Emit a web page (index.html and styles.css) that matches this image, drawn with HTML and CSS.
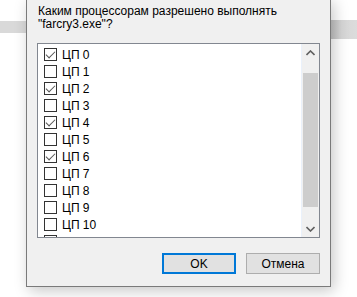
FILE: index.html
```html
<!DOCTYPE html>
<html lang="ru">
<head>
  <meta charset="UTF-8" />
  <title>Соответствие</title>
  <link rel="stylesheet" href="styles.css">
</head>
<body>
  <div class="desk">
    <div class="band band-left"></div>
    <div class="band band-right"></div>

    <div class="dialog">
      <div class="prompt">Каким процессорам разрешено выполнять<br>"farcry3.exe"?</div>

      <div class="listbox">
        <div class="items">
          <label class="item"><span class="box checked"></span>ЦП 0</label>
          <label class="item"><span class="box"></span>ЦП 1</label>
          <label class="item"><span class="box checked"></span>ЦП 2</label>
          <label class="item"><span class="box"></span>ЦП 3</label>
          <label class="item"><span class="box checked"></span>ЦП 4</label>
          <label class="item"><span class="box"></span>ЦП 5</label>
          <label class="item"><span class="box checked"></span>ЦП 6</label>
          <label class="item"><span class="box"></span>ЦП 7</label>
          <label class="item"><span class="box"></span>ЦП 8</label>
          <label class="item"><span class="box"></span>ЦП 9</label>
          <label class="item"><span class="box"></span>ЦП 10</label>
          <label class="item"><span class="box"></span></label>
        </div>
        <div class="scrollbar">
          <div class="arrow">
            <svg width="9" height="6" viewBox="0 0 9 6"><path d="M0.5 5 L4.5 1 L8.5 5" fill="none" stroke="#606060" stroke-width="1.6"/></svg>
          </div>
          <div class="track"><div class="thumb"></div></div>
          <div class="arrow">
            <svg width="9" height="6" viewBox="0 0 9 6"><path d="M0.5 1 L4.5 5 L8.5 1" fill="none" stroke="#606060" stroke-width="1.6"/></svg>
          </div>
        </div>
      </div>

      <div class="actions">
        <button class="btn default">OK</button>
        <button class="btn">Отмена</button>
      </div>
    </div>
  </div>
</body>
</html>
```

FILE: styles.css
```css
* {
  box-sizing: border-box;
}
body {
  margin: 0;
  background: #fff;
  font-family: 'Segoe UI', 'Liberation Sans', Arial, sans-serif;
  font-size: 12px;
  color: #000;
  overflow: hidden;
}
.desk {
  position: relative;
  width: 357px;
  height: 297px;
}
.band {
  position: absolute;
  background: #d9d9d9;
}
.band-left {
  left: 0;
  top: 21px;
  width: 26px;
  height: 12px;
}
.band-right {
  left: 331px;
  top: 20px;
  width: 26px;
  height: 19px;
  background: linear-gradient(to right, #c4c4c4, #d6d6d6 40%, #dcdcdc);
}
.dialog {
  position: absolute;
  left: 26px;
  top: -2px;
  width: 305px;
  height: 289px;
  background: #f0f0f0;
  border: 1px solid #7a7a7a;
  border-top: none;
  box-shadow: 3px 4px 14px rgba(0,0,0,0.22);
  padding: 7px 11px 0 10px;
  display: flex;
  flex-direction: column;
}
.prompt {
  line-height: 13px;
  height: 38px;
  padding-left: 1px;
}
.listbox {
  display: flex;
  width: 283px;
  height: 195px;
  flex: none;
  background: #fff;
  border: 1px solid #828790;
  overflow: hidden;
}
.items {
  flex: 1;
  padding: 2px 0 0 6px;
}
.item {
  display: flex;
  align-items: center;
  height: 17px;
  gap: 5px;
}
.box {
  width: 13px;
  height: 13px;
  border: 1px solid #333;
  background: #fff;
  position: relative;
}
.box.checked::after {
  content: '';
  position: absolute;
  left: 3px;
  top: 0px;
  width: 4px;
  height: 8px;
  border-right: 1px solid #555;
  border-bottom: 1px solid #555;
  transform: rotate(45deg);
}
.scrollbar {
  width: 18px;
  background: #f0f0f0;
  border-left: 1px solid #eaf1fb;
  display: flex;
  flex-direction: column;
}
.arrow {
  height: 17px;
  display: flex;
  align-items: center;
  justify-content: center;
}
.track {
  flex: 1;
  padding: 0 1px;
  display: flex;
  flex-direction: column;
}
.thumb {
  margin-top: 12px;
  height: 134px;
  background: #cdcdcd;
}
.actions {
  display: flex;
  justify-content: flex-end;
  gap: 10px;
  margin-top: 15px;
  width: 283px;
}
.btn {
  width: 74px;
  height: 21px;
  font-family: inherit;
  font-size: 12px;
  background: #e1e1e1;
  border: 1px solid #adadad;
  padding: 0;
  color: #000;
}
.btn.default {
  border: 2px solid #0078d7;
}
```
